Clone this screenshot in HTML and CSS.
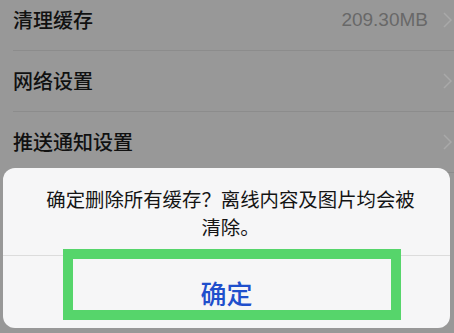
FILE: index.html
```html
<!DOCTYPE html>
<html lang="zh-CN">
<head>
<meta charset="utf-8">
<link rel="stylesheet" href="styles.css">
</head>
<body>
<div class="screen">
  <div class="list">
    <div class="row">
      <span class="label">清理缓存</span>
      <span class="right"><span class="value">209.30MB</span><svg class="chev" width="9" height="16" viewBox="0 0 9 16"><path d="M1 1 L8 8 L1 15" fill="none" stroke="#a9a9a9" stroke-width="1.5"/></svg></span>
    </div>
    <div class="row">
      <span class="label">网络设置</span>
      <span class="right"><svg class="chev" width="9" height="16" viewBox="0 0 9 16"><path d="M1 1 L8 8 L1 15" fill="none" stroke="#a9a9a9" stroke-width="1.5"/></svg></span>
    </div>
    <div class="row">
      <span class="label">推送通知设置</span>
      <span class="right"><svg class="chev" width="9" height="16" viewBox="0 0 9 16"><path d="M1 1 L8 8 L1 15" fill="none" stroke="#a9a9a9" stroke-width="1.5"/></svg></span>
    </div>
  </div>
  <div class="dialog">
    <div class="message">确定删除所有缓存？离线内容及图片均会被清除。</div>
    <div class="action">确定</div>
    <div class="highlight"></div>
  </div>
</div>
</body>
</html>
```
FILE: styles.css
```css
html, body {
  margin: 0;
  padding: 0;
  background: #989898;
}
.screen {
  position: relative;
  width: 454px;
  height: 333px;
  overflow: hidden;
  font-family: "Noto Sans CJK SC", "Noto Sans", sans-serif;
}
.list {
  margin-top: -10px;
}
.row {
  height: 60px;
  margin-left: 13px;
  border-bottom: 1px solid #8c8c8c;
  display: flex;
  align-items: center;
  justify-content: space-between;
}
.label {
  font-size: 20px;
  color: #111111;
  line-height: 1;
  font-weight: 500;
}
.right {
  display: flex;
  align-items: center;
  gap: 15px;
  padding-right: 2px;
}
.value {
  font-family: "Liberation Sans", Arial, sans-serif;
  font-size: 19px;
  color: #686868;
}
.chev {
  display: block;
}
.dialog {
  position: absolute;
  left: 3px;
  top: 168px;
  width: 447px;
  height: 160px;
  background: #f6f6f7;
  border-radius: 12px;
  display: flex;
  flex-direction: column;
}
.message {
  height: 88px;
  box-sizing: border-box;
  padding: 17px 26px 0 34px;
  font-size: 19.4px;
  line-height: 28px;
  color: #141414;
  text-align: center;
  border-bottom: 1px solid #dcdcdc;
}
.action {
  flex: 1;
  display: flex;
  align-items: center;
  justify-content: center;
  font-size: 26px;
  color: #1f4fcc;
  font-weight: 500;
}
.highlight {
  position: absolute;
  left: 60px;
  top: 81px;
  width: 338px;
  height: 71px;
  box-sizing: border-box;
  border: 10px solid #56d56b;
}
```
